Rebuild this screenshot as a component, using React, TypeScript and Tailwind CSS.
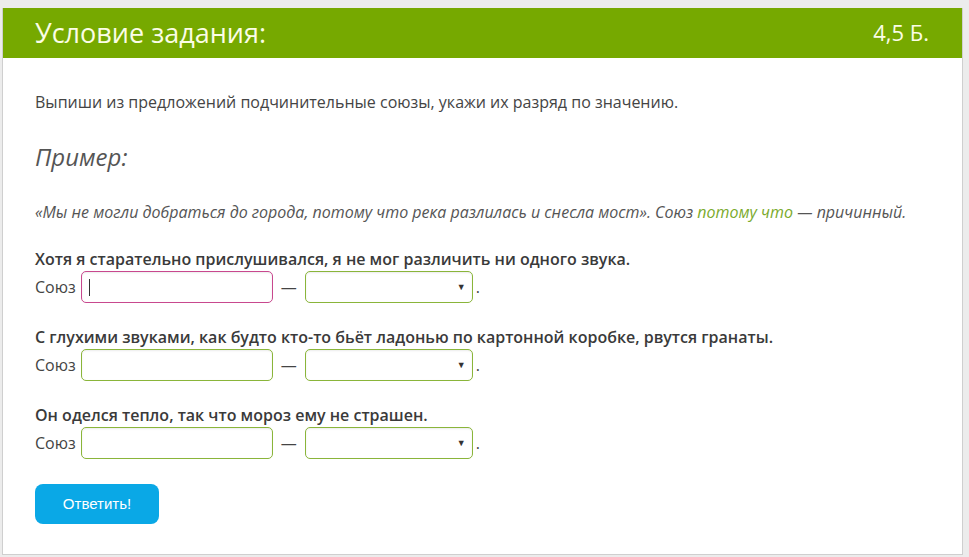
import React from 'react';

const questions = [
  { text: 'Хотя я старательно прислушивался, я не мог различить ни одного звука.', active: true },
  { text: 'С глухими звуками, как будто кто-то бьёт ладонью по картонной коробке, рвутся гранаты.', active: false },
  { text: 'Он оделся тепло, так что мороз ему не страшен.', active: false },
];

const AnswerRow: React.FC<{ active?: boolean }> = ({ active }) => (
  <div className="flex items-center h-[32px] mt-px">
    <span className="text-[16px] text-[#444]">Союз</span>
    <div
      className={`relative ml-[5px] w-[192px] h-[32px] rounded-[5px] border bg-white shadow-[inset_0_1px_2px_rgba(0,0,0,0.08)] ${
        active ? 'border-[#c8488e]' : 'border-[#8ab53a]'
      }`}
    >
      {active && <span className="absolute left-[7px] top-[7px] w-px h-[17px] bg-[#333]" />}
    </div>
    <span className="mx-[8px] text-[16px] text-[#444]">—</span>
    <div className="relative w-[168px] h-[32px] rounded-[5px] border border-[#8ab53a] bg-white shadow-[inset_0_1px_2px_rgba(0,0,0,0.08)]">
      <span className="absolute right-[6px] top-[9px] text-[9px] leading-[12px] text-[#333]">▼</span>
    </div>
    <span className="ml-[3px] text-[16px] text-[#444]">.</span>
  </div>
);

export default function App() {
  return (
    <div className="min-h-[557px] bg-[#ececec] pt-[8px] pl-[2px]" style={{ fontFamily: '"Open Sans", "Noto Sans", sans-serif' }}>
      <div className="w-[961px] bg-white border-l border-r border-b border-[#cfcfcf]">
        <div className="h-[50px] bg-[#76a900] flex items-center justify-between pl-[32px] pr-[33px] text-[#fbfde6]">
          <h1 className="text-[27px] leading-none -mt-[2px]">Условие задания:</h1>
          <span className="text-[22px] leading-none -mt-[2px]">4,5 Б.</span>
        </div>

        <div className="pt-[33px] px-[32px] pb-[30px]">
          <p className="text-[16px] leading-[22px] text-[#444]">
            Выпиши из предложений подчинительные союзы, укажи их разряд по значению.
          </p>
          <h2 className="mt-[29px] text-[24px] leading-[30px] italic text-[#555]">Пример:</h2>
          <p className="mt-[29px] text-[16px] leading-[22px] italic text-[#555]">
            «Мы не могли добраться до города, потому что река разлилась и снесла мост». Союз{' '}
            <span className="text-[#7aaa2c]">потому что</span> — причинный.
          </p>

          {questions.map((q, i) => (
            <div key={i} className={i === 0 ? 'mt-[25px]' : 'mt-[23px]'}>
              <p className="text-[16px] leading-[22px] font-semibold text-[#3a3a3a]">{q.text}</p>
              <AnswerRow active={q.active} />
            </div>
          ))}

          <button
            className="mt-[25px] w-[124px] h-[40px] rounded-[8px] bg-[#0aa8e6] text-white text-[15px]"
            style={{ fontFamily: '"Liberation Sans", Arial, sans-serif' }}
          >
            Ответить!
          </button>
        </div>
      </div>
    </div>
  );
}
